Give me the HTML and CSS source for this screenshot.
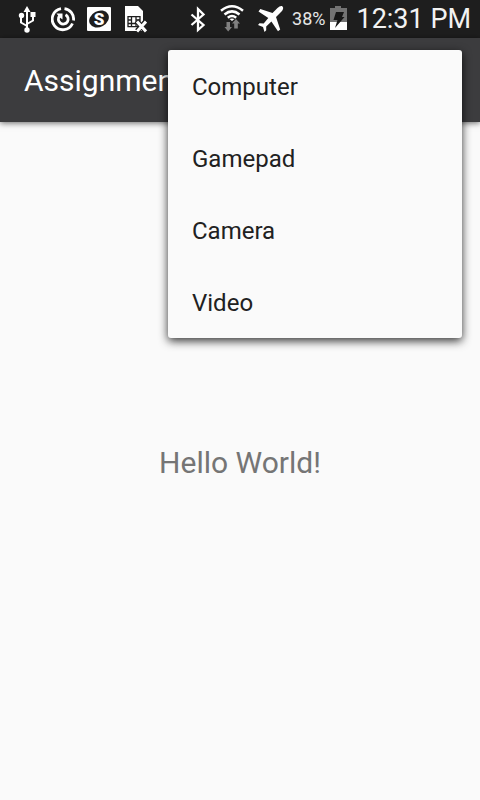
FILE: index.html
```html
<!DOCTYPE html>
<html lang="en">
<head>
<meta charset="utf-8">
<meta name="viewport" content="width=device-width, initial-scale=1">
<title>Assignment</title>
<link rel="stylesheet" href="styles.css">
</head>
<body>
<div class="status-bar">
  <div class="notifications">
    <svg width="24" height="28" viewBox="0 0 24 28" aria-label="USB" role="img">
      <g fill="none" stroke="#fff" stroke-width="2"><path d="M12 5v18M12 21L6 17.500V11M12 19L18 15.500V9"/></g>
      <path d="M12 1l3.500 6h-7zM15.500 7h5v5h-5z" fill="#fff"/><circle cx="6.500" cy="10.500" r="2.700" fill="#fff"/><circle cx="12" cy="25" r="2.700" fill="#fff"/>
    </svg>
    <svg width="24" height="28" viewBox="0 0 24 28" aria-label="Sync" role="img">
      <g fill="none" stroke="#fff" stroke-width="2.800"><path d="M13.500 3.600A10.600 10.600 0 0 1 22.500 15.500M21.500 18.500A10.600 10.600 0 1 1 10 3.700"/><path d="M14.500 9.800A4.900 4.900 0 1 1 8.500 11"/></g>
      <path d="M5.500 8.500h6v6l-2-1.500-2-2z" fill="#fff"/>
    </svg>
    <svg width="24" height="28" viewBox="0 0 24 28" aria-label="S app" role="img">
      <rect y="2" width="24" height="24" rx="1" fill="#fff"/>
      <ellipse cx="12" cy="14" rx="10.300" ry="8" fill="#1e1e1e" transform="rotate(-28 12 14)"/>
      <text class="app-letter" x="12" y="20" text-anchor="middle" fill="#fff">S</text>
    </svg>
    <svg width="24" height="28" viewBox="0 0 24 28" aria-label="No SIM" role="img">
      <path d="M2 1h13l5 5v20H2z" fill="#fff"/>
      <path d="M5 11.700h12v10H5zM8.500 12v10M13 12v10M5 15h3.500M5 18.500h3.500M13 15h4M8.500 18.500H13" fill="none" stroke="#1e1e1e" stroke-width="1.300"/>
      <path d="M13.500 16l9 10M23 16l-9 10" stroke="#1e1e1e" stroke-width="5"/>
      <path d="M14 16.500l9 10M23 16.500l-9 10" stroke="#fff" stroke-width="3"/>
    </svg>
  </div>
  <div class="system">
    <svg width="16" height="28" viewBox="0 0 16 28" aria-label="Bluetooth" role="img">
      <path d="M1.500 9.500l12 10.500L8 25V4l5.500 5.500L1.500 20" fill="none" stroke="#fff" stroke-width="2.300"/>
    </svg>
    <svg width="24" height="28" viewBox="0 0 24 28" aria-label="Wi-Fi" role="img">
      <g fill="none" stroke="#fff" stroke-width="2.500"><path d="M1 5.800Q12-3.200 23 5.800M4.500 9.500Q12 3.200 19.500 9.500M7.800 12.800Q12 9.300 16.200 12.800"/></g>
      <path d="M9.500 14q2.500-1.200 5 0L12 16z" fill="#fff"/>
      <path d="M6.500 17H10v5h2l-3.800 4.500L4.500 22h2zM14.200 23.500v-5h-2.200L16 14l4 4.500h-2.200v5z" fill="#808080"/>
    </svg>
    <svg width="26" height="28" viewBox="0 0 26 28" aria-label="Airplane mode" role="img">
      <path d="M24.500 1.500c1.300 1.200.6 3.200-1 5L18 12l4.200 12.500-2.200 1.800-6.600-9.800-5.200 5v3.700L6.500 27 5 22 0 20l1.500-1.700 4.200.3 4.600-5.500L.5 6.500 2.300 4 14.500 8l5-5c2-1.700 3.700-2.500 5-1.500z" fill="#fff"/>
    </svg>
    <div class="battery">
      <span class="percent">38%</span>
      <svg width="17" height="28" viewBox="0 0 17 28" aria-label="Charging" role="img">
        <path d="M5 1h6v2h6v14H0V3h5z" fill="#737373"/><path d="M0 17h17v8H0z" fill="#fff"/>
        <path d="M6 7h8l-2 5h2.500L5 23l2.500-8H3.500z" fill="#161616"/>
      </svg>
    </div>
    <time class="clock">12:31 PM</time>
  </div>
</div>
<header class="app-bar">
  <h1 class="title">Assignment</h1>
  <ul class="menu">
    <li><button class="item" type="button">Computer</button></li>
    <li><button class="item" type="button">Gamepad</button></li>
    <li><button class="item" type="button">Camera</button></li>
    <li><button class="item" type="button">Video</button></li>
  </ul>
</header>
<main class="content"><p class="message">Hello World!</p></main>
</body>
</html>
```
FILE: styles.css
```css
* { box-sizing: border-box; }
body {
  margin: 0;
  min-height: 100vh;
  display: flex;
  flex-direction: column;
  background: #fafafa;
  font-family: Roboto, "Liberation Sans", sans-serif;
}
svg { display: block; flex: none; }
.status-bar {
  display: flex;
  align-items: center;
  justify-content: space-between;
  height: 38px;
  padding: 0 9px 0 15px;
  background: #1e1e1e;
  color: #fff;
}
.notifications { display: flex; gap: 12px; }
.system { display: flex; align-items: center; gap: 14px; }
.battery { display: flex; align-items: center; gap: 5px; margin: 0 -5px 0 -6px; }
.percent { font-size: 18px; line-height: 28px; color: #e6e6e6; }
.clock { font-size: 27px; line-height: 38px; color: #f2f2f2; white-space: nowrap; }
.app-letter { font-size: 17px; font-weight: 900; }
.app-bar {
  position: relative;
  z-index: 1;
  display: flex;
  align-items: center;
  height: 84px;
  padding: 2px 24px 0;
  background: #3c3c3e;
  box-shadow: 0 1px 6px rgba(0, 0, 0, 0.6);
}
.title { margin: 0; font-size: 30px; line-height: 36px; font-weight: 400; color: #fff; }
.menu {
  position: absolute;
  top: 12px;
  right: 18px;
  width: 294px;
  margin: 0;
  padding: 0;
  list-style: none;
  background: #fafafa;
  border-radius: 3px;
  box-shadow: 0 3px 10px rgba(0, 0, 0, 0.8);
}
.item {
  display: block;
  width: 100%;
  height: 72px;
  padding: 2px 24px 0;
  border: 0;
  background: none;
  font: 400 24px/32px Roboto, "Liberation Sans", sans-serif;
  color: #212121;
  text-align: left;
}
.content { flex: 1; display: flex; align-items: center; justify-content: center; padding-top: 4px; }
.message { margin: 0; font-size: 30px; line-height: 36px; color: #757575; }
```
